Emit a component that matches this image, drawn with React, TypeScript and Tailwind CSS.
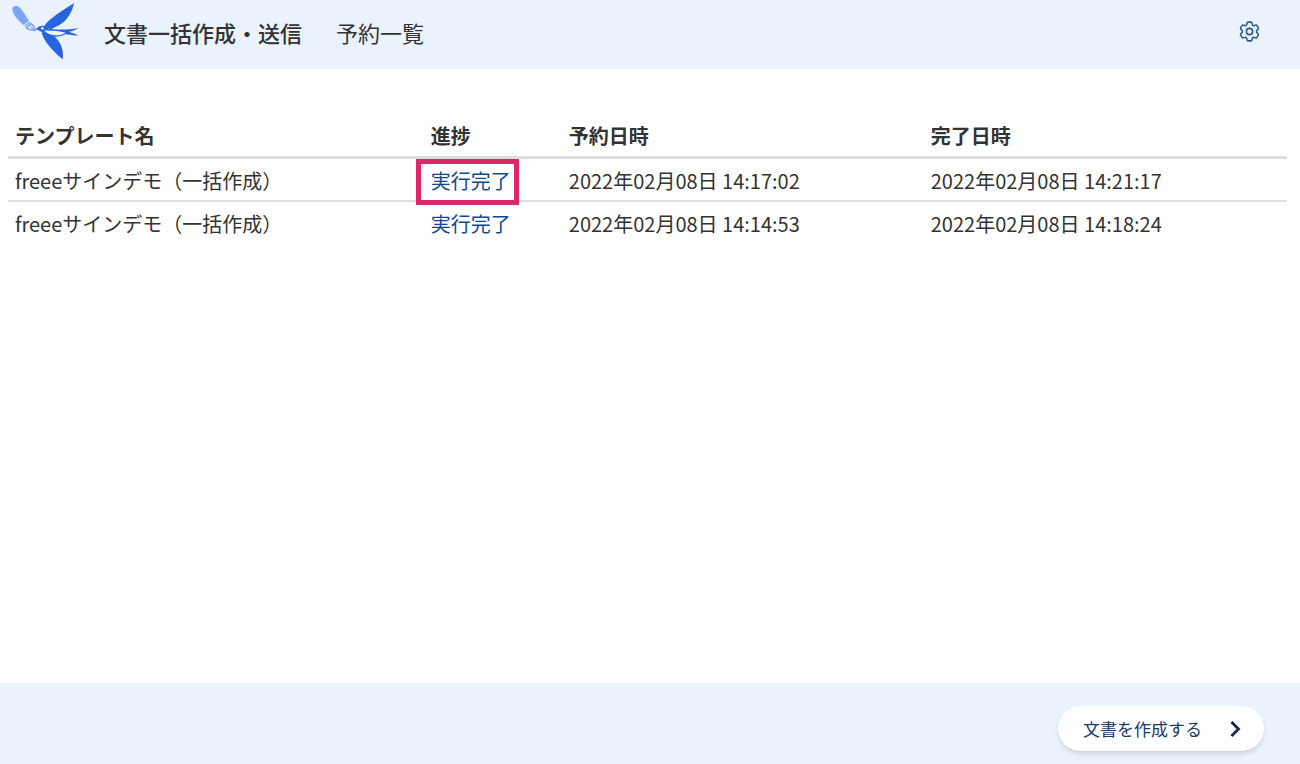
import { HiOutlineCog6Tooth } from "react-icons/hi2";

const columns = [
  { title: 'テンプレート名', width: 'w-[32.5%]' },
  { title: '進捗', width: 'w-[10.8%]' },
  { title: '予約日時', width: 'w-[28.3%]' },
  { title: '完了日時', width: 'w-[28.4%]' },
]

const reservations = [
  { template: 'freeeサインデモ（一括作成）', status: '実行完了', reserved: '2022年02月08日 14:17:02', finished: '2022年02月08日 14:21:17', marked: true },
  { template: 'freeeサインデモ（一括作成）', status: '実行完了', reserved: '2022年02月08日 14:14:53', finished: '2022年02月08日 14:18:24', marked: false },
]

// swallow carrying a pen
function Logo() {
  return (
    <svg viewBox="30 0 210 180" className="w-[70px] h-[60px]" role="img" aria-label="freeeサイン">
      <path d="M37 30C35 18 50 13 60 23C69 34 79 49 87 62L71 75C58 65 40 47 37 30Z" fill="#7aa5f2" />
      <path d="M74 79L90 66" stroke="#7aa5f2" strokeWidth="4" />
      <path d="M79 83L93 71C101 76 104 83 104 91C95 92 86 90 79 83Z" fill="#dce9fd" stroke="#6f9cf0" strokeWidth="4" />
      <path d="M91 81L106 92" stroke="#6f9cf0" strokeWidth="3" />
      <path d="M131 81C142 62 165 46 222 9C217 34 205 55 187 69C176 77 163 83 152 88Z" fill="#2864e1" />
      <path d="M125 98C132 122 147 142 188 178C191 159 187 139 174 121C169 114 163 109 157 106Z" fill="#2864e1" />
      <path d="M104 88C112 86 115 77 126 77C136 77 139 84 148 86C176 90 205 90 235 84C225 91 216 93 207 95C217 99 226 101 234 106C219 107 207 103 196 103C180 113 148 113 130 101C124 95 114 89 104 88Z" fill="#2864e1" />
      <path d="M133 92C152 91 176 93 197 98C180 109 149 109 133 92Z" fill="#f2f7ff" />
      <circle cx="127" cy="85" r="4" fill="#eaf2fe" />
    </svg>
  )
}

export default function App() {
  return (
    <div className="min-h-screen flex flex-col bg-white text-[#333333] font-['Noto_Sans_CJK_JP','Noto_Sans',sans-serif]" lang="ja">
      <header className="flex items-start justify-between h-[69px] bg-[#eaf2fe] pl-[10px] pr-[38px]">
        <div className="flex items-center">
          <a href="#"><Logo /></a>
          <h1 className="ml-6 mt-[3px] text-[22px] leading-8 font-medium">文書一括作成・送信</h1>
          <p className="ml-[34px] mt-[3px] text-[22px] leading-8">予約一覧</p>
        </div>
        <button type="button" aria-label="設定" className="mt-[19px] text-[25px] text-[#2f5788] cursor-pointer"><HiOutlineCog6Tooth /></button>
      </header>

      <main className="grow pt-[47px] pl-2 pr-[13px]">
        <table className="w-full table-fixed border-collapse text-[20px] leading-6 text-left">
          <thead>
            <tr className="border-b-3 border-[#dedede]">
              {columns.map((col) => (
                <th key={col.title} scope="col" className={`${col.width} px-[7px] py-2 font-bold`}>{col.title}</th>
              ))}
            </tr>
          </thead>
          <tbody>
            {reservations.map((item) => (
              <tr key={item.reserved} className="border-b-2 border-[#dedede] last:border-b-0">
                <td className="px-[7px] pt-[10px] pb-[7px]">{item.template}</td>
                <td className="relative px-[7px] pt-[10px] pb-[7px]">
                  <a href="#" className="text-[#0f4b8f]">{item.status}</a>
                  {item.marked && <span className="absolute -left-2 top-0 w-[103px] h-[46px] border-5 border-[#dc2868] pointer-events-none"></span>}
                </td>
                <td className="px-[7px] pt-[10px] pb-[7px]">{item.reserved}</td>
                <td className="px-[7px] pt-[10px] pb-[7px]">{item.finished}</td>
              </tr>
            ))}
          </tbody>
        </table>
      </main>

      <footer className="flex items-center justify-end h-[81px] bg-[#eaf2fe] pr-9 pt-[10px]">
        <button type="button" className="flex items-center gap-[26px] h-[45px] pl-[25px] pr-[22px] rounded-full bg-white shadow-md text-[17px] leading-6 text-[#1a3a68] cursor-pointer">
          文書を作成する
          <svg viewBox="0 0 14 18" className="w-[14px] h-[18px] text-[#12284c]" fill="none" stroke="currentColor" strokeWidth="2.8">
            <path d="M3.5 2L10.5 9L3.5 16" />
          </svg>
        </button>
      </footer>
    </div>
  );
}
